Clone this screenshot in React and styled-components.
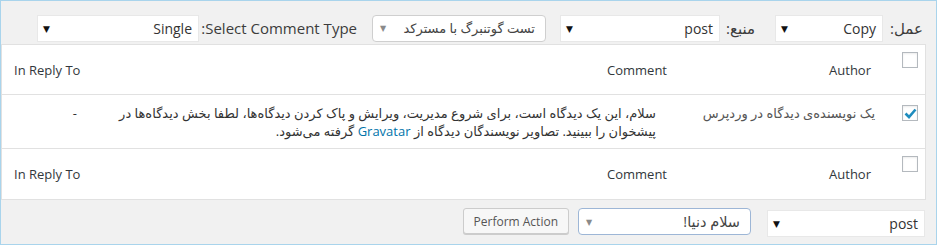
import React from 'react'
import styled, { createGlobalStyle } from 'styled-components'

const Global = createGlobalStyle`
  html, body { margin: 0; padding: 0; background: #fff; }
  body { font-family: "Open Sans", "DejaVu Sans", sans-serif; color: #32373c; }
  * { box-sizing: border-box; }
`

const Frame = styled.div`
  width: 937px;
  height: 245px;
  border: 1px solid #a9d4ec;
  background: #f1f1f1;
  direction: rtl;
  display: flex;
  flex-direction: column;
`

const TopBar = styled.div`
  height: 43px;
  display: flex;
  align-items: center;
  padding: 11px 13px 0 0;
`

const Label = styled.span`
  width: ${p => p.$w}px;
  flex-shrink: 0;
  font-size: 15px;
  color: #3c3c3c;
  white-space: nowrap;
`

const Select = styled.div`
  width: ${p => p.$w}px;
  flex-shrink: 0;
  height: 27px;
  background: #fff;
  border: 1px solid #e8e8e8;
  display: flex;
  align-items: center;
  justify-content: space-between;
  padding: 0 6px 0 5px;
  font-size: 14px;
  color: #333;
  white-space: nowrap;
  overflow: hidden;
  margin-left: ${p => p.$gap || 0}px;
  margin-top: ${p => p.$top || 0}px;
`

const RoundSelect = styled(Select)`
  border: 1px solid ${p => p.$blue ? '#9db6d6' : '#cfcfcf'};
  border-radius: 4px;
  padding: 0 10px 0 7px;
  font-size: ${p => p.$fs || 13}px;
  color: #444;
`

const Arrow = styled.span`
  font-size: ${p => p.$soft ? 8 : 9}px;
  color: ${p => p.$soft ? '#8a8a8a' : '#111'};
  line-height: 1;
`

const Table = styled.div`
  margin-right: 10px;
  background: #fff;
  border: 1px solid #e1e1e1;
`

const Row = styled.div`
  display: grid;
  grid-template-columns: 36px 209px 1fr 100px;
  height: ${p => p.$h}px;
  border-bottom: ${p => p.$last ? 'none' : '1px solid #e1e1e1'};
`

const CheckCell = styled.div`
  padding: ${p => p.$top}px 7px 0 0;
`

const Box = styled.div`
  width: 16px;
  height: 16px;
  border: 1px solid #b4b9be;
  background: #fff;
  box-shadow: inset 0 1px 2px rgba(0, 0, 0, 0.08);
  display: flex;
  align-items: center;
  justify-content: center;
`

const HeadCell = styled.div`
  display: flex;
  align-items: center;
  justify-content: flex-start;
  padding: 0 ${p => p.$pr || 0}px 0 ${p => p.$pl || 0}px;
  font-size: 13px;
  color: #32373c;
  white-space: nowrap;
  direction: ${p => p.$left ? 'ltr' : 'rtl'};
`

const DataCell = styled.div`
  padding: 9px ${p => p.$pr || 0}px 0 0;
  font-size: 13px;
  line-height: 18px;
  color: ${p => p.$muted ? '#555' : '#333'};
  white-space: nowrap;
`

const Link = styled.a`
  color: #0073aa;
  text-decoration: none;
  font-family: "Open Sans", sans-serif;
  font-size: 13px;
`

const BottomBar = styled.div`
  flex: 1;
  display: flex;
  align-items: flex-start;
  padding: 8px 11px 0 0;
`

const Button = styled.div`
  height: 26px;
  padding: 0 10px;
  border: 1px solid #cccccc;
  border-radius: 3px;
  background: #f7f7f7;
  box-shadow: 0 1px 0 #ccc;
  font-size: 12px;
  color: #555;
  display: flex;
  align-items: center;
  direction: ltr;
`

const Check = ({ on }) => (
  <Box>
    {on && (
      <svg width="13" height="11" viewBox="0 0 13 11">
        <path d="M1.5 5.5 L5 9 L11.5 1.5" fill="none" stroke="#1e8cbe" strokeWidth="2.6" />
      </svg>
    )}
  </Box>
)

const Header = ({ last }) => (
  <Row $h={50} $last={last}>
    <CheckCell $top={7}><Check /></CheckCell>
    <HeadCell $pr={18}>Author</HeadCell>
    <HeadCell $pr={13}>Comment</HeadCell>
    <HeadCell $left $pl={12}>In Reply To</HeadCell>
  </Row>
)

export default function App() {
  return (
    <>
      <Global />
      <Frame>
        <TopBar>
          <Label $w={40}>عمل:</Label>
          <Select $w={108} $gap={20}>
            <span>Copy</span>
            <Arrow>▼</Arrow>
          </Select>
          <Label $w={35}>منبع:</Label>
          <Select $w={160} $gap={14}>
            <span>post</span>
            <Arrow>▼</Arrow>
          </Select>
          <RoundSelect $w={174} $gap={15}>
            <span>تست گوتنبرگ با مسترکد</span>
            <Arrow $soft>▼</Arrow>
          </RoundSelect>
          <Label $w={158}>Select Comment Type:</Label>
          <Select $w={162}>
            <span>Single</span>
            <Arrow>▼</Arrow>
          </Select>
        </TopBar>
        <Table>
          <Header />
          <Row $h={54}>
            <CheckCell $top={10}><Check on /></CheckCell>
            <DataCell $pr={14} $muted>یک نویسنده‌ی دیدگاه در وردپرس</DataCell>
            <DataCell $pr={24}>
              سلام، این یک دیدگاه است، برای شروع مدیریت، ویرایش و پاک کردن دیدگاه‌ها، لطفا بخش دیدگاه‌ها در
              <br />
              پیشخوان را ببینید. تصاویر نویسندگان دیدگاه از <Link href="#">Gravatar</Link> گرفته می‌شود.
            </DataCell>
            <DataCell $pr={25}>-</DataCell>
          </Row>
          <Header last />
        </Table>
        <BottomBar>
          <Select $w={158} $gap={16} $top={2}>
            <span>post</span>
            <Arrow>▼</Arrow>
          </Select>
          <RoundSelect $w={173} $gap={9} $fs={14.5} $blue>
            <span>سلام دنیا!</span>
            <Arrow $soft>▼</Arrow>
          </RoundSelect>
          <Button>Perform Action</Button>
        </BottomBar>
      </Frame>
    </>
  )
}
